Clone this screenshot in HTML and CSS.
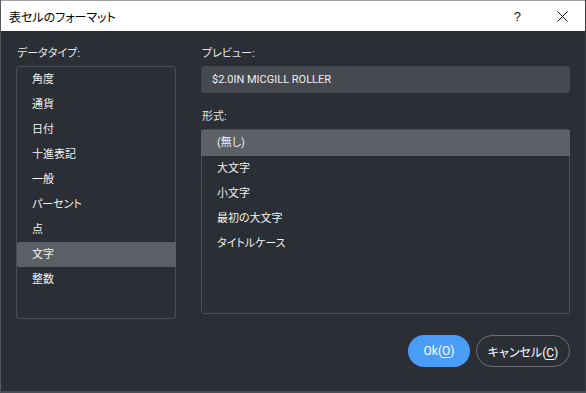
FILE: index.html
```html
<!DOCTYPE html>
<html lang="ja">
<head>
<meta charset="utf-8">
<title>表セルのフォーマット</title>
<link rel="stylesheet" href="styles.css">
</head>
<body>
<div class="window">
  <div class="titlebar">
    <span class="title">表セルのフォーマット</span>
    <span class="help">?</span>
    <svg class="close" width="11" height="11" viewBox="0 0 11 11"><path d="M0.5 0.5 L10.5 10.5 M10.5 0.5 L0.5 10.5" stroke="#111" stroke-width="1" fill="none"/></svg>
  </div>
  <div class="content">
    <div class="columns">
      <div class="col-left">
        <div class="label">データタイプ:</div>
        <ul class="list list-types">
          <li>角度</li>
          <li>通貨</li>
          <li>日付</li>
          <li>十進表記</li>
          <li>一般</li>
          <li>パーセント</li>
          <li>点</li>
          <li class="selected">文字</li>
          <li>整数</li>
        </ul>
      </div>
      <div class="col-right">
        <div class="label">プレビュー:</div>
        <div class="preview">$2.0IN MICGILL ROLLER</div>
        <div class="label">形式:</div>
        <ul class="list list-format">
          <li class="selected">(無し)</li>
          <li>大文字</li>
          <li>小文字</li>
          <li>最初の大文字</li>
          <li>タイトルケース</li>
        </ul>
      </div>
    </div>
    <div class="buttons">
      <button class="btn btn-primary">Ok(<u>O</u>)</button>
      <button class="btn btn-secondary">キャンセル(<u>C</u>)</button>
    </div>
  </div>
</div>
</body>
</html>
```
FILE: styles.css
```css
html, body {
  margin: 0;
  padding: 0;
  width: 586px;
  height: 393px;
  overflow: hidden;
  background: #4b4e53;
}
body {
  font-family: "Roboto", "Noto Sans CJK JP", sans-serif;
  font-feature-settings: "palt";
}
.window {
  width: 584px;
  height: 391px;
  border-left: 1px solid #55585c;
  border-right: 1px solid #3b3e43;
  display: flex;
  flex-direction: column;
  background: #2b2e34;
}
.titlebar {
  height: 31px;
  background: #ffffff;
  border-top: 1px solid #a0a0a0;
  box-sizing: border-box;
  display: flex;
  align-items: center;
  padding-left: 8px;
}
.title {
  font-family: "Noto Sans CJK JP", sans-serif;
  font-size: 12px;
  color: #000;
  flex: 1;
}
.help {
  font-family: "Liberation Sans", sans-serif;
  font-size: 13px;
  color: #111;
  margin-right: 36px;
}
.close {
  margin-right: 17px;
}
.content {
  flex: 1;
  display: flex;
  flex-direction: column;
  padding: 16px 15px 0 15px;
}
.columns {
  display: flex;
  gap: 25px;
}
.col-left {
  width: 160px;
  display: flex;
  flex-direction: column;
}
.col-right {
  flex: 1;
  display: flex;
  flex-direction: column;
}
.label {
  font-size: 11px;
  line-height: 14px;
  color: #e6e6e6;
  margin-bottom: 5px;
  padding-left: 1px;
}
.list {
  list-style: none;
  margin: 0;
  padding: 0;
  border: 1px solid #4b4e54;
  border-radius: 3px;
  box-sizing: border-box;
}
.list li {
  height: 25px;
  line-height: 25px;
  font-size: 11px;
  color: #f2f2f2;
}
.list-types {
  height: 253px;
}
.list-types li {
  padding-left: 15px;
}
.list-types li.selected {
  background: #5c5f65;
  margin-right: -1px;
  border-radius: 2px 0 0 2px;
}
.preview {
  height: 27px;
  line-height: 27px;
  background: #46494f;
  border-radius: 3px;
  padding-left: 11px;
  font-size: 11px;
  color: #f0f0f0;
  margin-bottom: 17px;
}
.list-format {
  height: 185px;
  padding-top: 1px;
}
.list-format li {
  padding-left: 15px;
}
.list-format li.selected {
  background: #5d6066;
  margin: -1px -1px 0 -1px;
  height: 26px;
  padding-left: 16px;
}
.buttons {
  display: flex;
  justify-content: flex-end;
  gap: 6px;
  margin-top: 16px;
  padding-right: 0;
}
.btn {
  height: 32px;
  border-radius: 16px;
  font-family: "Roboto", "Noto Sans CJK JP", sans-serif;
  font-feature-settings: "palt";
  font-size: 12px;
  color: #ffffff;
  padding: 0;
  cursor: pointer;
}
.btn u {
  text-underline-offset: 2px;
}
.btn-primary {
  width: 62px;
  background: #4a9df7;
  border: none;
}
.btn-secondary {
  width: 94px;
  background: transparent;
  border: 1px solid #6b6e73;
}
```
